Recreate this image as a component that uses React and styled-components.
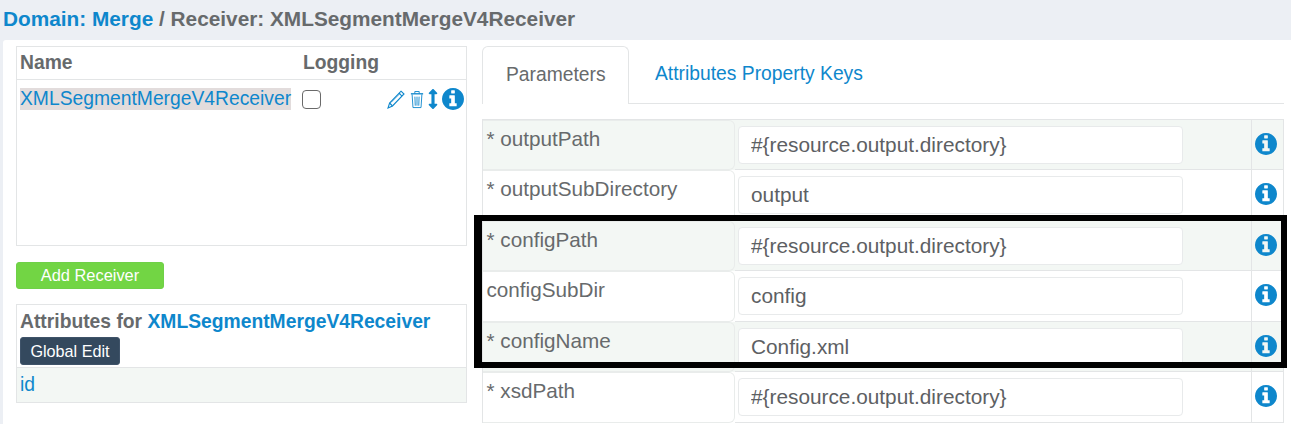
import React from "react";
import styled, { createGlobalStyle } from "styled-components";
import { FaArrowsAltV } from "react-icons/fa";

const GlobalStyle = createGlobalStyle`
  html, body {
    margin: 0;
    padding: 0;
    background: #eceff4;
    font-family: "Liberation Sans", Arial, sans-serif;
    color: #676a6c;
  }
`;

const Page = styled('div')`
  width: 1291px;
  height: 424px;
  overflow: hidden;
  position: relative;
`;

const Heading = styled('h1')`
  margin: 0;
  height: 40px;
  box-sizing: border-box;
  padding: 8px 0 0 3px;
  font-size: 20.8px;
  line-height: 22px;
  font-weight: bold;
  white-space: nowrap;
  color: #676a6c;
`;

const BlueText = styled('span')`
  color: #0e87cc;
`;

const Panel = styled('div')`
  margin-left: 3px;
  height: 384px;
  background: #fff;
  display: grid;
  grid-template-columns: 451px 802px;
  column-gap: 15px;
  padding: 6px 0 0 13px;
  box-sizing: border-box;
  border-top-left-radius: 3px;
`;

const LeftColumn = styled('div')`
  display: flex;
  flex-direction: column;
`;

const ReceiverBox = styled('div')`
  height: 200px;
  box-sizing: border-box;
  border: 1px solid #e3e5e6;
`;

const ReceiverHead = styled('div')`
  display: grid;
  grid-template-columns: 283px 1fr;
  height: 33px;
  box-sizing: border-box;
  padding-left: 3px;
  align-items: center;
  border-bottom: 1px solid #e3e5e6;
  font-size: 19.3px;
  font-weight: bold;
`;

const ReceiverRow = styled('div')`
  display: grid;
  grid-template-columns: 282px 1fr auto;
  padding: 8px 2px 0 3px;
  align-items: center;
`;

const NameLink = styled('span')`
  color: #0e87cc;
  background: #e2dcdc;
  font-size: 19.3px;
  line-height: 22px;
  width: 271px;
  white-space: nowrap;
`;

const CheckBox = styled('span')`
  display: block;
  box-sizing: border-box;
  width: 19px;
  height: 19px;
  border: 1.5px solid #6a6a6a;
  border-radius: 4px;
`;

const ActionIcons = styled('div')`
  display: flex;
  align-items: center;
  color: #0e87cc;
`;

const AddButton = styled('button')`
  margin-top: 16px;
  width: 148px;
  height: 27px;
  padding: 0;
  border: 1px solid #6fd048;
  border-radius: 3px;
  background: #72d544;
  color: #fff;
  font-family: inherit;
  font-size: 16.4px;
`;

const AttributesBox = styled('div')`
  margin-top: 15px;
  height: 99px;
  box-sizing: border-box;
  border: 1px solid #e3e5e6;
  display: flex;
  flex-direction: column;
`;

const AttributesHead = styled('div')`
  height: 63px;
  padding: 6px 0 0 3px;
  box-sizing: border-box;
  border-bottom: 1px solid #e3e5e6;
`;

const AttributesTitle = styled('div')`
  font-size: 19.3px;
  line-height: 22px;
  font-weight: bold;
  white-space: nowrap;
`;

const GlobalEdit = styled('button')`
  display: block;
  margin-top: 4px;
  width: 100px;
  height: 28px;
  padding: 0;
  border: 1px solid #3f5369;
  border-radius: 3px;
  background: #34495e;
  color: #fff;
  font-family: inherit;
  font-size: 16.2px;
`;

const AttributeRow = styled('div')`
  flex: 1;
  background: #f3f7f4;
  padding-left: 3px;
  color: #0e87cc;
  font-size: 19.3px;
  line-height: 33px;
`;

const RightColumn = styled('div')`
  display: flex;
  flex-direction: column;
`;

const Tabs = styled('div')`
  height: 58px;
  box-sizing: border-box;
  display: flex;
  gap: 2px;
  border-bottom: 1px solid #e3e5e6;
`;

const Tab = styled('div')`
  box-sizing: border-box;
  height: ${props => props.active ? '58px' : '57px'};
  padding: 16px 24px 0;
  font-size: 19.3px;
  line-height: 24px;
  color: ${props => props.active ? '#676a6c' : '#0e87cc'};
  background: #fff;
  ${props => props.active && `
    width: 147px;
    padding-left: 23px;
    border: 1px solid #e3e5e6;
    border-bottom: 0;
    border-radius: 6px 6px 0 0;
  `}
`;

const ParamTable = styled('div')`
  margin-top: 14.75px;
  border-top: 1px solid #e3e5e6;
  border-left: 1px solid #e3e5e6;
  border-right: 1px solid #e3e5e6;
`;

const ParamRow = styled('div')`
  display: grid;
  grid-template-columns: 252px 516px 1fr;
  height: 50.5px;
  box-sizing: border-box;
  background: ${props => props.striped ? '#f3f7f4' : '#fff'};
`;

const LabelCell = styled('div')`
  box-sizing: border-box;
  padding: 5px 0 0 3.5px;
  font-size: 20.7px;
  line-height: 26px;
  border: 1px solid #e9eceb;
  border-left: 0;
  border-radius: 0 6px 6px 0;
  white-space: nowrap;
`;

const InputCell = styled('div')`
  padding: 6px 0 0 3px;
  box-sizing: border-box;
  border-bottom: 1px solid #e3e5e6;
`;

const ValueInput = styled('input')`
  display: block;
  box-sizing: border-box;
  width: 445px;
  height: 38px;
  padding: 0 12px;
  background: #fff;
  border: 1px solid #e8eaeb;
  border-radius: 4px;
  color: #5d6063;
  font-family: inherit;
  font-size: 20.8px;
  outline: none;
`;

const InfoCell = styled('div')`
  box-sizing: border-box;
  display: flex;
  justify-content: center;
  padding: 13px 4px 0 0;
  border-left: 1px solid #e3e5e6;
  border-bottom: 1px solid #e3e5e6;
  line-height: 0;
`;

const Highlight = styled('div')`
  position: absolute;
  left: 474px;
  top: 215px;
  width: 813px;
  height: 153px;
  box-sizing: border-box;
  border: 6px solid #000;
  border-left-width: 8px;
  pointer-events: none;
`;

const InfoIcon = ({ size = 22 }) => (
  <svg width={size} height={size} viewBox="128 128 1536 1536" fill="#0e87cc">
    <path d="M1152 1376v-160q0-14-9-23t-23-9h-96v-512q0-14-9-23t-23-9h-320q-14 0-23 9t-9 23v160q0 14 9 23t23 9h96v320h-96q-14 0-23 9t-9 23v160q0 14 9 23t23 9h448q14 0 23-9t9-23zm-128-896v-160q0-14-9-23t-23-9h-192q-14 0-23 9t-9 23v160q0 14 9 23t23 9h192q14 0 23-9t9-23zm640 416q0 209-103 385.5t-279.5 279.5-385.5 103-385.5-103-279.5-279.5-103-385.5 103-385.5 279.5-279.5 385.5-103 385.5 103 279.5 279.5 103 385.5z" />
  </svg>
);

const PencilIcon = () => (
  <svg width="20" height="21" viewBox="0 0 20 21" fill="none" stroke="currentColor" strokeWidth="1.1">
    <path d="M15 2.2 L18 5 L6.5 17 L2 19 L3.6 14 Z" />
    <path d="M13 4.2 L16 7.2" />
    <path d="M3.6 14 L6.5 17" />
    <path d="M5 13.5 L14 4.5" strokeWidth="0.7" />
  </svg>
);

const TrashIcon = () => (
  <svg width="14" height="19" viewBox="0 0 16 20" preserveAspectRatio="none" fill="none" stroke="currentColor" strokeWidth="1" style={{ marginLeft: 4 }}>
    <path d="M1 4 H15" strokeWidth="1.4" />
    <path d="M5.5 3.6 V1.6 H10.5 V3.6" />
    <path d="M2.4 4.6 L3.4 18.5 H12.6 L13.6 4.6" />
    <path d="M5.6 7 L6 16.5 M8 7 V16.5 M10.4 7 L10 16.5" />
  </svg>
);

const params = [
  { label: '* outputPath', value: '#{resource.output.directory}' },
  { label: '* outputSubDirectory', value: 'output' },
  { label: '* configPath', value: '#{resource.output.directory}' },
  { label: 'configSubDir', value: 'config' },
  { label: '* configName', value: 'Config.xml' },
  { label: '* xsdPath', value: '#{resource.output.directory}' },
];

export default function App() {
  return (
    <Page>
      <GlobalStyle />
      <Heading>
        <BlueText>Domain: Merge</BlueText> / Receiver: XMLSegmentMergeV4Receiver
      </Heading>
      <Panel>
        <LeftColumn>
          <ReceiverBox>
            <ReceiverHead>
              <span>Name</span>
              <span>Logging</span>
            </ReceiverHead>
            <ReceiverRow>
              <NameLink>XMLSegmentMergeV4Receiver</NameLink>
              <CheckBox />
              <ActionIcons>
                <PencilIcon />
                <TrashIcon />
                <FaArrowsAltV size={20} style={{ width: 14, marginLeft: 2, marginRight: 2 }} />
                <InfoIcon />
              </ActionIcons>
            </ReceiverRow>
          </ReceiverBox>
          <AddButton>Add Receiver</AddButton>
          <AttributesBox>
            <AttributesHead>
              <AttributesTitle>
                Attributes for <BlueText>XMLSegmentMergeV4Receiver</BlueText>
              </AttributesTitle>
              <GlobalEdit>Global Edit</GlobalEdit>
            </AttributesHead>
            <AttributeRow>id</AttributeRow>
          </AttributesBox>
        </LeftColumn>
        <RightColumn>
          <Tabs>
            <Tab active>Parameters</Tab>
            <Tab>Attributes Property Keys</Tab>
          </Tabs>
          <ParamTable>
            {params.map((p, i) => (
              <ParamRow key={p.label} striped={i % 2 === 0}>
                <LabelCell>{p.label}</LabelCell>
                <InputCell>
                  <ValueInput readOnly value={p.value} />
                </InputCell>
                <InfoCell>
                  <InfoIcon />
                </InfoCell>
              </ParamRow>
            ))}
          </ParamTable>
        </RightColumn>
      </Panel>
      <Highlight />
    </Page>
  );
}
